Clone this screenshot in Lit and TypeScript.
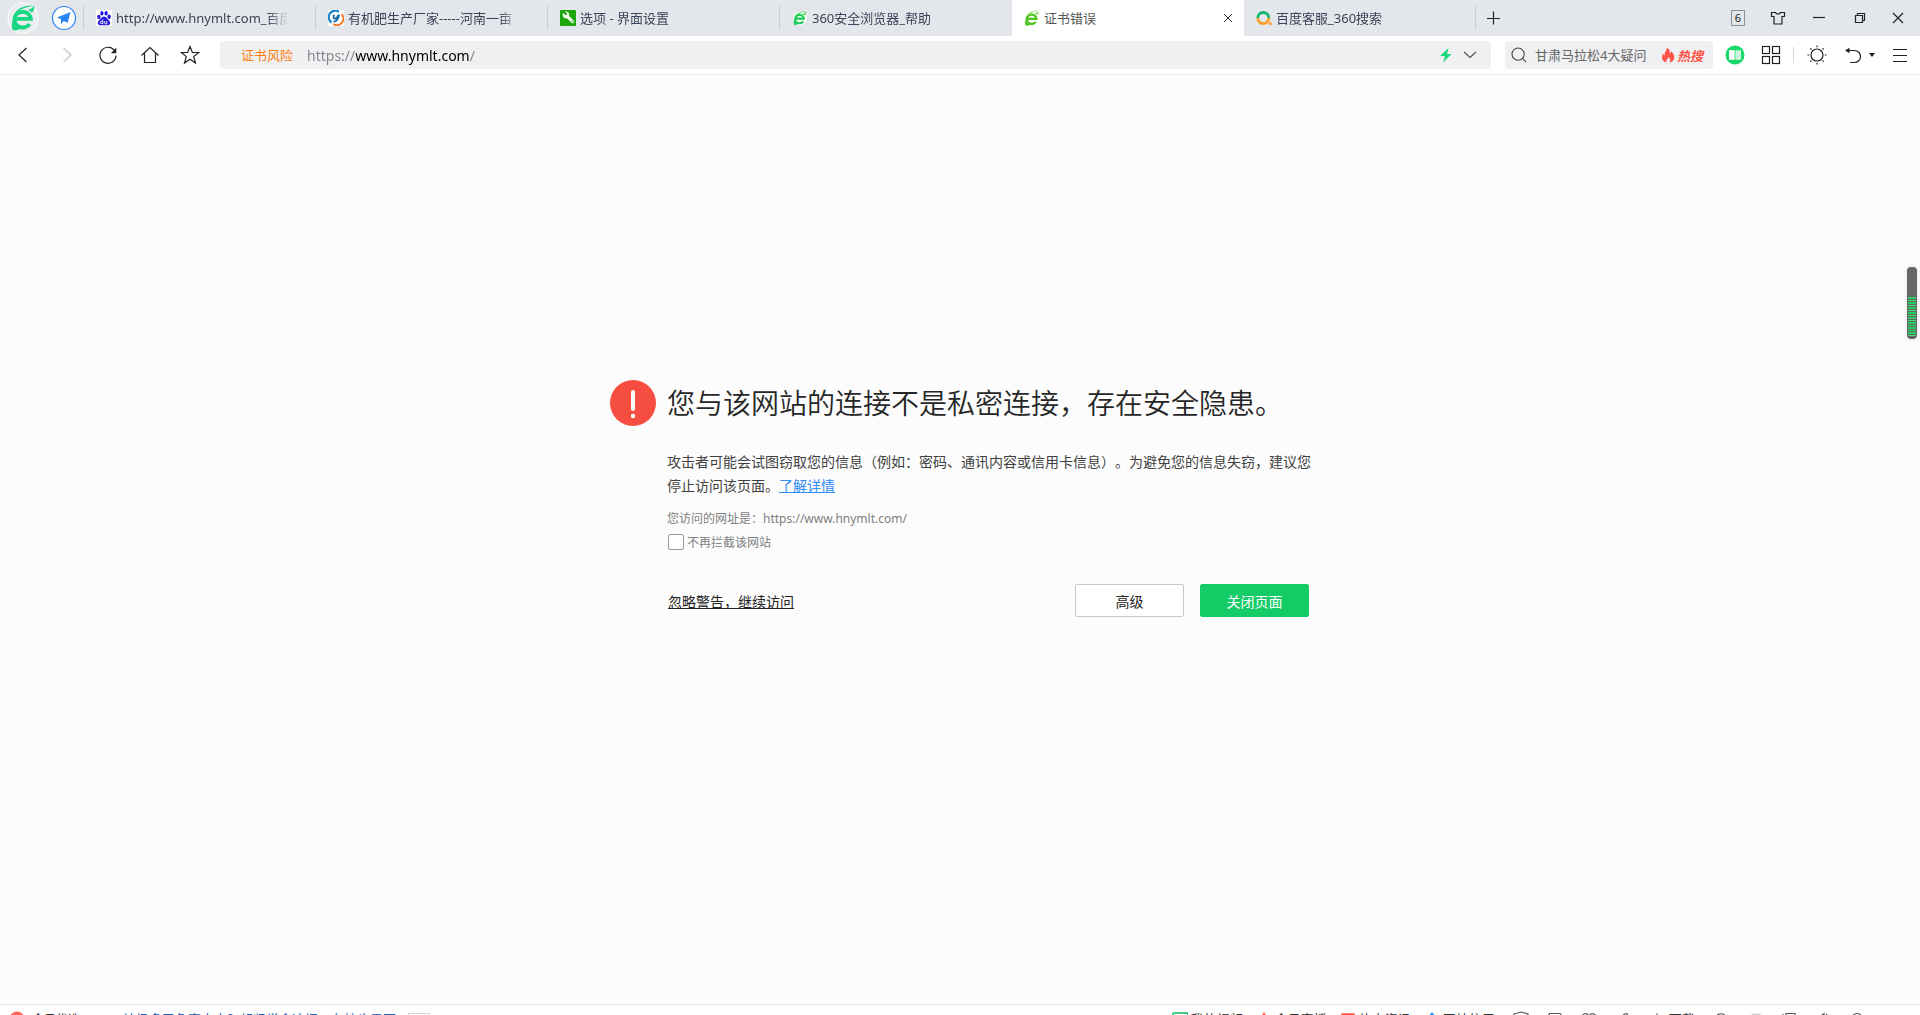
import { LitElement, html, svg, css, nothing } from "lit";
import { customElement, property } from "lit/decorators.js";

const leaf = (main: string, swoosh: string) => svg`
  <path d="M12.500 20.800H28.300A8.200 7.800 0 1 0 27 26" fill="none" stroke=${main} stroke-width="3.800"/>
  <path d="M10 31.500C8 26.500 10.500 20.500 13.500 17l.8 4c-2 3.500-2.600 6-1.600 7.200 1 1 2.600.3 4.500-.7l1.800 2.500c-3.500 2.400-7 3.400-9 1.500z" fill=${main}/>
  <path d="M11 18.500C13 11.500 20 7 31.500 7.500 22 9 15.500 12 11 18.500zM25.500 12c3-.8 5-2.200 6-4.500.8 2.500.1 5-2 7z" fill=${swoosh}/>`;

const favicons: Record<string, unknown> = {
  baidu: svg`<rect width="16" height="16" fill="#fff"/>
    <g fill="#2319dc"><ellipse cx="2.900" cy="6.900" rx="1.700" ry="2.200"/><ellipse cx="5.900" cy="3.300" rx="1.600" ry="2.200"/><ellipse cx="10.100" cy="3.300" rx="1.600" ry="2.200"/><ellipse cx="13.100" cy="6.700" rx="1.700" ry="2.200"/>
    <path d="M8 6.500c1.600 0 2.500 1.200 3.300 2.300.9 1.200 2.900 2 2.900 4 0 2-1.600 2.700-3.200 2.500-2-.2-4-.2-6 0-1.700.2-3.200-.6-3.200-2.500 0-2 2-2.800 2.900-4C5.500 7.700 6.400 6.500 8 6.500z"/></g>
    <path d="M6.800 9.500v4.300M6.500 11.300H5.200c-1.300 0-1.300 2.300 0 2.300h1.500M8.700 11v2c0 .5.300.8.800.8h1.300V11" fill="none" stroke="#fff" stroke-width=".9"/>`,
  orbit: svg`<rect width="16" height="16" fill="#fff"/>
    <path d="M11 1.900A6.300 6.300 0 0 0 3.500 12.500" fill="none" stroke="#1d86c5" stroke-width="2.200"/>
    <path d="M13.600 4.200A6.500 6.500 0 0 1 5.200 14" fill="none" stroke="#f07a28" stroke-width="2"/>
    <path d="M6 4.800c-.6 2-.6 3.600.7 3.800 1.500.2 2.900-1.400 3.800-3.800M11.200 4.600C10.300 8.500 9.200 11.500 5.600 11.800" fill="none" stroke="#186ba9" stroke-width="1.900"/>`,
  wrench: svg`<rect width="16" height="16" rx="1" fill="#1ea60d"/>
    <path d="M3 2.800l2.300 2.300 1.500-.2.200-1.500L5 1.700c2-.6 4.400.8 4.300 3.400l-.2.900 4.700 4.700c1.200 1.400-.8 3.400-2.200 2.200L7 8.200c-2.700 1-5.300-1.600-4-5.400z" fill="#eefbe9"/><circle cx="12.300" cy="11.500" r=".7" fill="#1ea60d"/>`,
  browser: svg`<circle cx="8" cy="8.300" r="7.400" fill="#fff" stroke="#d4d9dc" stroke-width=".6"/><g transform="translate(-3.300 -2.600) scale(.54)">${leaf("#1ccf5c", "#35d83f")}</g>`,
  leaf: svg`<g transform="translate(-4.500 -3.700) scale(.6)">${leaf("#4cc41c", "#7ed957")}</g>`,
  search: svg`<path d="M1.800 8A5.300 5.300 0 0 1 12.800 8" fill="none" stroke="#16b56f" stroke-width="2.800"/><path d="M1.800 8A5.500 5.500 0 0 0 12.800 8" fill="none" stroke="#ff9f2e" stroke-width="2.800"/><circle cx="14.400" cy="13.600" r="1.600" fill="#ff9f2e"/>`,
};

const glyphs: Record<string, unknown> = {
  back: svg`<path d="M12.500 3L5 10l7.500 7"/>`,
  forward: svg`<path d="M7.500 3l7.500 7-7.500 7" stroke="#c4c6c9"/>`,
  reload: svg`<path d="M17.300 7A8 8 0 1 0 18 10.500"/><path d="M18.300 2.800v5.400h-5.400z" fill="#222" stroke="none"/>`,
  home: svg`<path d="M1.500 10.500L10 2.500l8.500 8M4.500 8.500v9h11v-9"/>`,
  star: svg`<path d="M10 1.500l2.400 6h6.300l-5 4.100 1.800 6.400-5.500-3.700-5.500 3.700 1.800-6.400-5-4.100h6.300z"/>`,
  grid: svg`<rect x="1.500" y="1.500" width="7" height="7"/><rect x="11.500" y="1.500" width="7" height="7"/><rect x="1.500" y="11.500" width="7" height="7"/><rect x="11.500" y="11.500" width="7" height="7"/>`,
  book: svg`<circle cx="10" cy="10" r="9.500" fill="#1bd76a" stroke="none"/><path d="M4 5.200h5.600v9.600H4z" fill="#fff" stroke="none"/><path d="M10.400 5.200H16v9.600h-5.600z" fill="#c9f5db" stroke="none"/>`,
  sun: svg`<circle cx="10" cy="10" r="6"/><path d="M10 .5v1.800M10 17.700v1.800M.5 10h1.800M17.700 10h1.800M3.300 3.300l1.200 1.200M15.500 15.500l1.200 1.200M3.300 16.700l1.200-1.200M15.500 4.500l1.200-1.200"/>`,
  undo: svg`<path d="M3 5.500h8.500a6 6 0 0 1 0 12H7"/><path d="M2 5.500l4.500-2.800v5.600z" fill="#222" stroke="none"/>`,
  menu: svg`<path d="M3 4.500h14M3 10.500h14M3 16.500h14"/>`,
  plus: svg`<path d="M9.500 3.500v13M3 10.500h13"/>`,
  close: svg`<path d="M5 5l10 10M15 5L5 15"/>`,
  minimize: svg`<path d="M5 9.500h12"/>`,
  restore: svg`<path d="M7.500 7.500h7v7h-7zM9.500 7.500v-2h7v7h-2"/>`,
  shirt: svg`<path d="M3.500 4.500h4c.8 2 4.200 2 5 0h4v4h-2.500v7.500H6V8.500H3.500z"/>`,
  bolt: svg`<path d="M12.500 3l-8.500 8h5l-2 6.500L15.500 9h-4.500z" fill="#1cd67b" stroke="none"/>`,
  down: svg`<path d="M4 7l6 5.500L16 7"/>`,
  glass: svg`<circle cx="9" cy="9" r="6.800"/><path d="M13.800 13.800l4.200 4.200"/>`,
};

const statusGlyphs: Record<string, unknown> = {
  red: svg`<circle cx="8" cy="8" r="7.500" fill="#ff665a" stroke="none"/>`,
  video: svg`<rect x="1" y="2" width="15" height="12" rx="1" stroke="#12b85c" stroke-width="1.400"/>`,
  fire: svg`<path d="M8 1l3 5 3 4-3 5H5l-3-5 3-4z" fill="#ff4f48" stroke="none"/>`,
  news: svg`<path d="M2.500 3.500h11v11h-11z" stroke="#fb5145" stroke-width="2.500"/>`,
  app: svg`<path d="M8 1l4 5 3 5-7 4-7-4 3-5z" fill="#2294f2" stroke="none"/>`,
  shield: svg`<path d="M1 3l7-2 7 2V9c0 3-4 6-7 7-3-1-7-4-7-7zM11 5L6 8"/>`,
  box: svg`<rect x="2" y="2.500" width="12" height="11" rx="1"/>`,
  heart: svg`<path d="M8 5C6 1.500 1 2 1 6.500c0 4 7 8 7 8s7-4 7-8C15 2 10 1.500 8 5z"/>`,
  rocket: svg`<path d="M12 2.500c-4 0-6 3-8 8l3 2c4-2 6-5 5-10z"/>`,
  arrow: svg`<path d="M8 2.500v11M4 10l4 4 4-4"/>`,
  cup: svg`<path d="M3 8c0-7 10-7 10 0v6H3z"/>`,
  faint: svg`<path d="M3 8c1-5 5-6 6-4 3-2 6 0 4 4" stroke="#ccc"/>`,
  window: svg`<path d="M5 2.500h9v9H5zM2 3v10h8"/>`,
  sound: svg`<path d="M2 6h3l4-3.500v11L5 10H2zM11 3c3 2 3 8 0 10"/>`,
  zoom: svg`<circle cx="8" cy="8" r="5.500"/>`,
};

const icon = (name: string) => html`<svg class="icon" viewBox="0 0 20 20" aria-hidden="true">${glyphs[name]}</svg>`;
const small = (name: string) => html`<svg class="small" viewBox="0 0 16 16" aria-hidden="true">${statusGlyphs[name]}</svg>`;

const shared = css`
  :host, * { box-sizing: border-box; }
  button { font: inherit; color: inherit; background: none; border: 0; padding: 0; margin: 0; display: flex; align-items: center; justify-content: center; flex: none; cursor: pointer; }
  .icon { width: 20px; height: 20px; fill: none; stroke: #222; stroke-width: 1.2; display: block; flex: none; }
  svg { flex: none; }
`;

@customElement("tab-strip")
export class TabStrip extends LitElement {
  @property({ attribute: false }) tabs: { icon: string; title: string; active?: boolean }[] = [];
  static styles = [shared, css`
    :host { display: flex; height: 36px; background: #e3e6ea; color: #3b4358; font-size: 13px; padding-right: 2px; }
    .brand { width: 46px; }
    .nav { width: 36px; }
    .lead { width: 2px; }
    .lead, .tab:not(.active) { background: linear-gradient(#cacdd1, #cacdd1) right center / 1px 24px no-repeat; }
    .tab { flex: 0 1 232px; min-width: 0; display: flex; align-items: center; padding: 0 6px 0 12px; gap: 4px; }
    .tab.active { background: #fff; color: #555; }
    .tab.before { background: none; }
    .fav { width: 16px; height: 16px; }
    .title { flex: 1; min-width: 0; overflow: hidden; white-space: nowrap; text-align: left; line-height: 20px; }
    .tab:not(.active) .title { margin-right: 22px; -webkit-mask-image: linear-gradient(to right, #000 calc(100% - 20px), transparent); mask-image: linear-gradient(to right, #000 calc(100% - 20px), transparent); }
    .close { width: 20px; height: 20px; }
    .close .icon { width: 16px; height: 16px; }
    .add { width: 36px; }
    .window { display: flex; margin-left: auto; }
    .window button { width: 40px; }
    .count { width: 14px; height: 16px; border: 1px solid #8d8f92; font-size: 11px; line-height: 14px; color: #222; }
  `];
  render() {
    const last = this.tabs.findIndex((t) => t.active) - 1;
    return html`
      <button class="brand" aria-label="360">
        <svg width="32" height="32" viewBox="0 0 32 32"><circle cx="16" cy="16" r="15" fill="#e9ecef" stroke="#fafbfc" stroke-width="1.200"/><g transform="translate(-4.500 -4)">${leaf("#17d783", "#17d783")}</g></svg>
      </button>
      <button class="nav" aria-label="导航">
        <svg width="26" height="26" viewBox="0 0 26 26"><circle cx="13" cy="13" r="11.500" fill="#fff" stroke="#2b85f0" stroke-width="1.200"/><path d="M19.500 7L6 12.500l5 2.200z" fill="#2d8cf8"/><path d="M19.500 7L10 14v5.200l2.600-3.200 4 1.800z" fill="#2683ef"/></svg>
      </button>
      <span class="lead"></span>
      ${this.tabs.map((t, i) => html`
        <div class="tab ${t.active ? "active" : i === last ? "before" : ""}">
          <svg class="fav" viewBox="0 0 16 16" aria-hidden="true">${favicons[t.icon]}</svg>
          <span class="title">${t.title}</span>
          ${t.active ? html`<button class="close" aria-label="关闭标签">${icon("close")}</button>` : nothing}
        </div>`)}
      <button class="add" aria-label="新标签">${icon("plus")}</button>
      <div class="window">
        <button aria-label="6"><span class="count">6</span></button>
        <button aria-label="皮肤">${icon("shirt")}</button>
        <button aria-label="最小化">${icon("minimize")}</button>
        <button aria-label="还原">${icon("restore")}</button>
        <button aria-label="关闭">${icon("close")}</button>
      </div>`;
  }
}

@customElement("tool-bar")
export class ToolBar extends LitElement {
  static styles = [shared, css`
    :host { display: flex; align-items: center; height: 39px; padding: 0 2px 0 3px; background: #fff; border-bottom: 1px solid #e9eaec; font-size: 13px; }
    .nav button { width: 42px; height: 28px; }
    .nav button:last-child { width: 38px; }
    .nav, .tools { display: flex; align-items: center; }
    .field { display: flex; align-items: center; height: 28px; background: #eff0f2; border-radius: 4px; }
    .address { flex: 1; min-width: 0; margin-left: 11px; padding: 0 9px 0 21px; }
    .risk { color: #ff7d0c; line-height: 20px; margin-right: 14px; white-space: nowrap; }
    input { font: inherit; border: 0; outline: 0; padding: 0; background: none; min-width: 0; flex: 1; height: 24px; }
    .url { font-size: 14px; color: transparent; background: linear-gradient(to right, #808388 49px, #000 49px, #000 162px, #808388 162px); -webkit-background-clip: text; background-clip: text; }
    .address button { width: 24px; height: 24px; }
    .address .icon { stroke: #555; }
    .search { width: 208px; margin: 0 4px 0 14px; padding: 0 10px 0 4px; }
    .search button.go { width: 20px; height: 24px; margin-right: 6px; }
    .search .go .icon { width: 18px; height: 18px; stroke: #444; }
    .search input::placeholder { color: #666; opacity: 1; }
    .hot { display: flex; align-items: center; gap: 2px; color: #ff5347; font-weight: 700; font-style: italic; }
    .tools button { width: 36px; height: 28px; }
    .split { width: 1px; height: 16px; background: #d5d7da; margin: 0 5px 0 4px; }
    .tools .undo { width: 47px; gap: 6px; }
  `];
  render() {
    const nav = [["back", "后退"], ["forward", "前进"], ["reload", "刷新"], ["home", "主页"], ["star", "收藏"]];
    return html`
      <div class="nav">${nav.map(([n, l]) => html`<button aria-label=${l}>${icon(n)}</button>`)}</div>
      <div class="field address">
        <span class="risk">证书风险</span>
        <input class="url" aria-label="地址" .value=${"https://www.hnymlt.com/"} spellcheck="false" />
        <button aria-label="加速">${icon("bolt")}</button>
        <button aria-label="展开">${icon("down")}</button>
      </div>
      <div class="field search">
        <button class="go" aria-label="搜索">${icon("glass")}</button>
        <input aria-label="搜索内容" placeholder="甘肃马拉松4大疑问" />
        <button class="hot"><svg width="14" height="16" viewBox="0 0 14 16"><path d="M6 .8c2.800 1.700 3 4 2.800 5.700 1-.4 1.300-1.200 1.300-2.200 2.300 2 3.200 4 3.200 6 0 3-2.200 5-5 5 1.600-1.700 1-4-1-5.500.1 1.600-.7 2.100-1.500 3-.6.800-.6 1.700-.1 2.600C2.800 15 1 13.200 1 10.600c0-1.700.6-3 1.400-4.100.2 1 .5 1.500 1.100 1.800C3.300 5.200 5.600 3.600 6 .8z" fill="#ff5347"/></svg>热搜</button>
      </div>
      <div class="tools">
        <button aria-label="阅读">${icon("book")}</button>
        <button aria-label="应用">${icon("grid")}</button>
        <span class="split"></span>
        <button aria-label="亮度">${icon("sun")}</button>
        <button class="undo" aria-label="撤销">${icon("undo")}<svg width="6" height="4" viewBox="0 0 6 4"><path d="M0 0h6L3 4z" fill="#222"/></svg></button>
        <button aria-label="菜单">${icon("menu")}</button>
      </div>`;
  }
}

@customElement("warning-page")
export class WarningPage extends LitElement {
  static styles = [shared, css`
    :host { display: flex; justify-content: center; align-items: flex-start; background: #fcfcfc; padding-top: 305px; font-size: 14px; color: #404040; text-spacing-trim: space-all; }
    .card { display: grid; grid-template-columns: 46px minmax(0, 645px); column-gap: 11px; padding-left: 2px; }
    .body { grid-column: 2; }
    h1 { margin: 0; font-size: 28px; font-weight: 350; line-height: 46px; color: #262626; }
    p { margin: 0; }
    .lead { margin-top: 24px; line-height: 24px; }
    .more { color: #2f8df6; }
    .site { margin-top: 12px; line-height: 18px; font-size: 12px; color: #808080; }
    .skip { display: flex; align-items: center; gap: 3px; margin-top: 6px; height: 16px; padding-left: 1px; font-size: 12px; color: #808080; }
    .skip input { appearance: none; width: 16px; height: 16px; margin: 0; border: 1px solid #9a9a9a; border-radius: 2px; background: #fff; }
    .actions { display: flex; align-items: center; gap: 16px; margin-top: 34px; padding: 0 3px 0 1px; }
    .ignore { margin-right: auto; color: #222; }
    .btn { width: 109px; height: 33px; border-radius: 2px; color: #222; background: #fff; border: 1px solid #c8c8c8; }
    .btn.primary { color: #fff; background: #14cc66; border-color: #14cc66; }
  `];
  render() {
    return html`
      <main class="card">
        <svg width="46" height="46" viewBox="0 0 46 46" aria-hidden="true"><circle cx="23" cy="23" r="23" fill="#f54d3f"/><rect x="21" y="10" width="4" height="21" rx="2" fill="#fff"/><circle cx="23" cy="36" r="2.200" fill="#fff"/></svg>
        <h1>您与该网站的连接不是私密连接，存在安全隐患。</h1>
        <div class="body">
          <p class="lead">攻击者可能会试图窃取您的信息（例如：密码、通讯内容或信用卡信息）。为避免您的信息失窃，建议您停止访问该页面。<a class="more" href="#">了解详情</a></p>
          <p class="site">您访问的网址是：https://www.hnymlt.com/</p>
          <label class="skip"><input type="checkbox" />不再拦截该网站</label>
          <div class="actions">
            <a class="ignore" href="#">忽略警告，继续访问</a>
            <button class="btn">高级</button>
            <button class="btn primary">关闭页面</button>
          </div>
        </div>
      </main>`;
  }
}

@customElement("status-bar")
export class StatusBar extends LitElement {
  static styles = [shared, css`
    :host { display: block; height: 11px; overflow: hidden; background: #fff; border-top: 1px solid #e6e6e6; font-size: 13px; color: #333; text-spacing-trim: space-all; }
    .row { display: flex; align-items: center; height: 27px; padding: 0 18px 0 9px; white-space: nowrap; }
    .small { width: 16px; height: 16px; fill: none; stroke: #555; stroke-width: 1.2; display: block; }
    .pick { gap: 7px; font-size: 12px; }
    .news { color: #2b5fb8; text-decoration: none; margin-left: 43px; }
    .tag { width: 22px; height: 12px; border: 1px solid #d4d4d4; margin-left: 8px; }
    .links { display: flex; margin-left: auto; gap: 13px; }
    .links button { gap: 3px; }
    .tools { display: flex; gap: 18px; margin-left: 18px; }
    .tools button { gap: 4px; }
  `];
  render() {
    const links = [["video", "我的视频"], ["fire", "今日直播"], ["news", "热点资讯"], ["app", "网站信用"]];
    const tools = [["shield", "安全"], ["box", "收纳"], ["heart", "医生"], ["rocket", "加速"], ["arrow", "下载"], ["cup", "清理"], ["faint", "静音"], ["window", "小窗"], ["sound", "声音"], ["zoom", "100%"]];
    return html`<div class="row">
      <button class="pick">${small("red")}今日优选</button>
      <a class="news" href="#">垃圾多了危害太大？赶紧学会这招，在校也需要!</a><span class="tag"></span>
      <div class="links">${links.map(([n, t]) => html`<button>${small(n)}${t}</button>`)}</div>
      <div class="tools">${tools.map(([n, t]) => html`<button aria-label=${t}>${small(n)}${n === "arrow" || n === "zoom" ? t : nothing}</button>`)}</div>
    </div>`;
  }
}

@customElement("speed-meter")
export class SpeedMeter extends LitElement {
  static styles = css`
    :host { display: block; width: 10px; height: 72px; padding: 30px 1px 2px; border-radius: 4px; background: #666; box-shadow: 0 0 5px #0000001c; box-sizing: border-box; }
    .bars { height: 100%; background: repeating-linear-gradient(#22cf62 0 2px, #666 2px 3px, #3fdc68 3px 4px, #666 4px 5px); }
  `;
  render() { return html`<div class="bars"></div>`; }
}

@customElement("app-root")
export class AppRoot extends LitElement {
  static styles = css`
    :host { display: flex; flex-direction: column; position: relative; height: 100vh; overflow: hidden; font-family: "Noto Sans", "Noto Sans CJK SC", sans-serif; background: #fcfcfc; }
    tab-strip, tool-bar, status-bar { flex: none; }
    warning-page { flex: 1; min-height: 0; }
    .meter { position: absolute; right: 3px; top: 267px; }
  `;
  private tabs = [
    { icon: "baidu", title: "http://www.hnymlt.com_百度" },
    { icon: "orbit", title: "有机肥生产厂家-----河南一亩" },
    { icon: "wrench", title: "选项 - 界面设置" },
    { icon: "browser", title: "360安全浏览器_帮助" },
    { icon: "leaf", title: "证书错误", active: true },
    { icon: "search", title: "百度客服_360搜索" },
  ];
  render() {
    return html`
      <tab-strip .tabs=${this.tabs}></tab-strip>
      <tool-bar></tool-bar>
      <warning-page></warning-page>
      <status-bar></status-bar>
      <speed-meter class="meter"></speed-meter>`;
  }
}
